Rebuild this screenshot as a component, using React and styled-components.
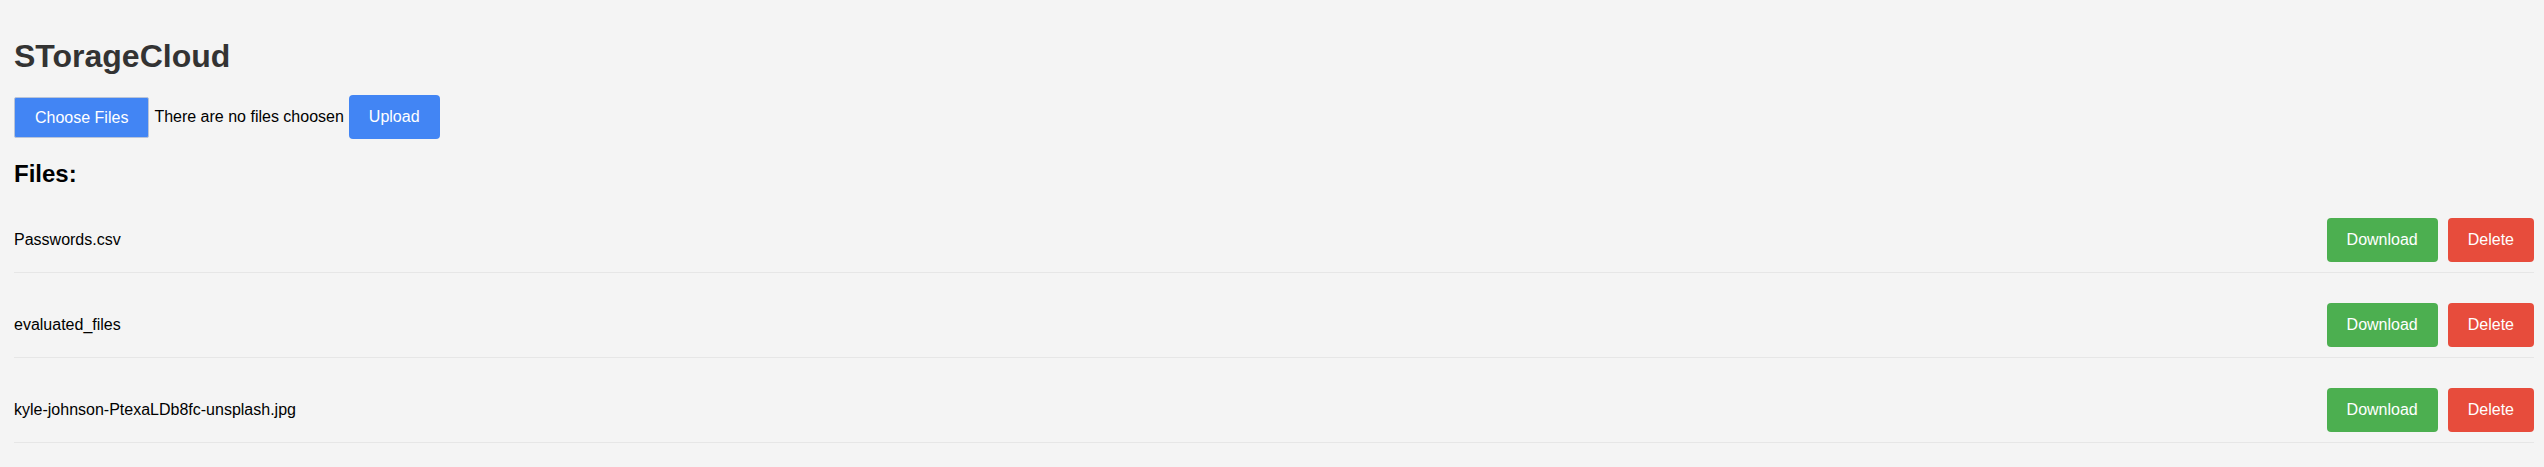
import React from "react";
import styled, { createGlobalStyle } from "styled-components";

const GlobalStyle = createGlobalStyle`
  html, body {
    margin: 0;
    padding: 0;
    background: #f4f4f4;
  }
  body {
    font-family: "Liberation Sans", Arial, Helvetica, sans-serif;
    color: #000;
  }
`;

const Page = styled.div`
  min-height: 467px;
  box-sizing: border-box;
  padding: 38px 10px 0 14px;
  background: #f4f4f4;
`;

const Title = styled.h1`
  margin: 0;
  font-size: 32px;
  line-height: 36px;
  font-weight: 700;
  color: #333;
`;

const UploadBar = styled.div`
  display: flex;
  align-items: center;
  gap: 5px;
  margin-top: 21px;
`;

const BaseButton = styled.button`
  font-family: inherit;
  font-size: 16px;
  color: #fff;
  border: none;
  cursor: pointer;
  white-space: nowrap;
  background: ${(p) => p.$bg};
`;

const ChooseButton = styled(BaseButton)`
  padding: 10px 20px;
  line-height: 19px;
  border: 1px solid #b9c4d8;
  border-radius: 2px;
`;

const ActionButton = styled(BaseButton)`
  padding: 12px 20px;
  line-height: 20px;
  border-radius: 4px;
`;

const NoFiles = styled.span`
  font-size: 16px;
  line-height: 20px;
  color: #000;
`;

const SectionTitle = styled.h2`
  margin: 21px 0 0;
  font-size: 24px;
  line-height: 28px;
  font-weight: 700;
  color: #000;
`;

const FileList = styled.ul`
  list-style: none;
  margin: 20px 0 0;
  padding: 0;
`;

const FileRow = styled.li`
  display: flex;
  align-items: center;
  justify-content: space-between;
  padding: 10px 0;
  border-bottom: 1px solid #e6e6e6;
  margin-bottom: 20px;
`;

const FileName = styled.span`
  font-size: 16px;
  line-height: 20px;
  color: #000;
`;

const Actions = styled.div`
  display: flex;
  gap: 10px;
`;

const files = [
  "Passwords.csv",
  "evaluated_files",
  "kyle-johnson-PtexaLDb8fc-unsplash.jpg",
];

export default function App() {
  return (
    <>
      <GlobalStyle />
      <Page>
        <Title>STorageCloud</Title>
        <UploadBar>
          <ChooseButton $bg="#4285f4">Choose Files</ChooseButton>
          <NoFiles>There are no files choosen</NoFiles>
          <ActionButton $bg="#4285f4">Upload</ActionButton>
        </UploadBar>
        <SectionTitle>Files:</SectionTitle>
        <FileList>
          {files.map((f) => (
            <FileRow key={f}>
              <FileName>{f}</FileName>
              <Actions>
                <ActionButton $bg="#4caf50">Download</ActionButton>
                <ActionButton $bg="#e74c3c">Delete</ActionButton>
              </Actions>
            </FileRow>
          ))}
        </FileList>
      </Page>
    </>
  );
}
